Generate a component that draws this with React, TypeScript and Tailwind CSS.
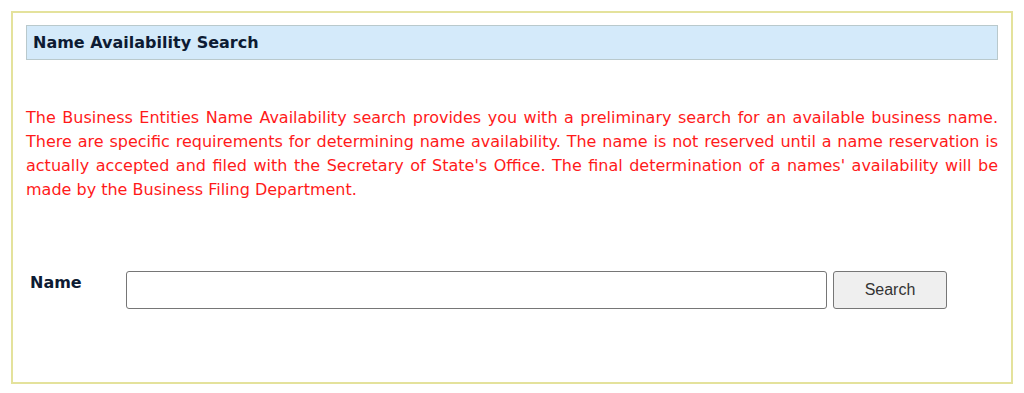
import React from "react";

const App = () => {
  return (
    <div className="min-h-[393px] bg-white px-[11px] pt-[11px] font-['DejaVu_Sans',Verdana,sans-serif]">
      <div className="h-[373px] border-2 border-[#e4e29c] px-[13px] pt-[12px]">
        <div className="flex h-[35px] items-center border border-[#b9c9cc] bg-[#d4eafa] px-[6px]">
          <h2 className="text-[16px] font-bold text-[#0d1b33]">
            Name Availability Search
          </h2>
        </div>

        <p className="mt-[46px] text-justify text-[16px] leading-[24px] text-[#ff1a1a]">
          The Business Entities Name Availability search provides you with a
          preliminary search for an available business name. There are specific
          requirements for determining name availability. The name is not
          reserved until a name reservation is actually accepted and filed with
          the Secretary of State's Office. The final determination of a names'
          availability will be made by the Business Filing Department.
        </p>

        <div className="mt-[69px] flex items-start">
          <label className="w-[100px] pl-[4px] text-[16px] font-bold leading-[24px] text-[#0d1b33]">
            Name
          </label>
          <input
            type="text"
            className="h-[38px] w-[701px] rounded-[3px] border border-[#767676] bg-white px-2 outline-none"
          />
          <button className="ml-[6px] h-[38px] w-[114px] rounded-[3px] border border-[#767676] bg-[#efefef] font-['Liberation_Sans',Arial,sans-serif] text-[16px] text-[#333]">
            Search
          </button>
        </div>
      </div>
    </div>
  );
};

export default App;
